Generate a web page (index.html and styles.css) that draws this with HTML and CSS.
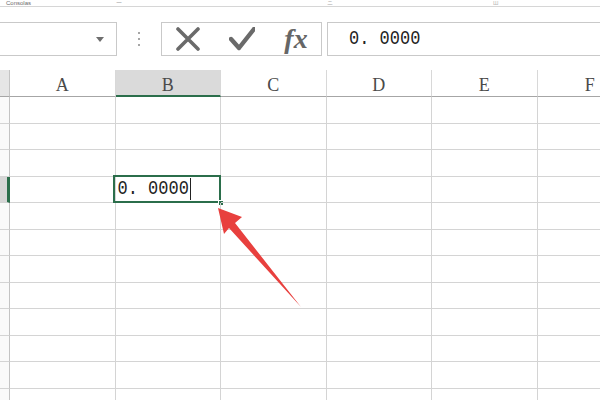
FILE: index.html
```html
<!DOCTYPE html>
<html lang="zh">
<head>
    <meta charset="UTF-8">
    <title>单元格格式 - 0.0000</title>
    <link rel="stylesheet" href="styles.css">
</head>
<body>
    <div class="sheet-app">
        <!-- 功能区底部（被截断） -->
        <div class="ribbon-edge">
            <div class="ribbon-labels">
                <span class="rl rl-1">Consolas</span>
                <span class="rl rl-2">ー</span>
                <span class="rl rl-3">ニ</span>
                <span class="rl rl-4">Ш</span>
            </div>
        </div>

        <!-- 编辑栏 -->
        <div class="formula-bar">
            <div class="name-box"><span class="drop"></span></div>
            <div class="grip"><i></i><i></i><i></i></div>
            <div class="fx-tools">
                <svg class="tool" width="26" height="24" viewBox="0 0 26 24">
                    <path d="M3 2 L23 22 M23 2 L3 22" stroke="#6a6a6a" stroke-width="3.6" stroke-linecap="round" fill="none"/>
                </svg>
                <svg class="tool" width="26" height="24" viewBox="0 0 26 24">
                    <path d="M2 12 L10 21 L25 2" stroke="#6a6a6a" stroke-width="4.4" stroke-linecap="round" stroke-linejoin="round" fill="none"/>
                </svg>
                <span class="tool fx">fx</span>
            </div>
            <div class="fx-input"><span class="num">0. 0000</span></div>
        </div>

        <!-- 工作表 -->
        <div class="grid" id="grid"></div>

        <!-- 红色箭头标注 -->
        <svg class="pointer" width="600" height="400" viewBox="0 0 600 400">
            <polygon points="218,208 242,217 235,223 301,307 229,228 224,234" fill="#e8403e"/>
        </svg>
    </div>

    <script src="grid.js"></script>
</body>
</html>
```

FILE: grid.js
```js
// 生成列标题和行
const grid = document.getElementById('grid');
const cols = ['A', 'B', 'C', 'D', 'E', 'F'];
const activeCol = 1;
const activeRow = 3;

let html = '<div class="corner"></div>';
cols.forEach((c, i) => {
    html += `<div class="col-head${i === activeCol ? ' on' : ''}">${c}</div>`;
});

for (let r = 0; r < 12; r++) {
    html += `<div class="row-head${r === activeRow ? ' on' : ''}"></div>`;
    cols.forEach((c, i) => {
        if (r === activeRow && i === activeCol) {
            html += '<div class="cell active"><span class="num">0. 0000</span><span class="caret"></span><span class="handle"></span></div>';
        } else {
            html += '<div class="cell"></div>';
        }
    });
}
grid.innerHTML = html;
```

FILE: styles.css
```css
* {
    margin: 0;
    padding: 0;
    box-sizing: border-box;
}

body {
    background: #fff;
    font-family: 'Liberation Sans', sans-serif;
}

.sheet-app {
    position: relative;
    width: 600px;
    height: 400px;
    overflow: hidden;
    background: #fff;
}

/* 功能区底部 */
.ribbon-edge {
    height: 7px;
    border-bottom: 1px solid #d6d6d6;
}

.ribbon-labels {
    display: flex;
    font-size: 6px;
    line-height: 6px;
    color: #6a6a6a;
}

.rl-1 { margin-left: 6px; }
.rl-2 { margin-left: 85px; color: #aaa; }
.rl-3 { margin-left: 205px; color: #aaa; }
.rl-4 { margin-left: 160px; color: #bbb; }

/* 编辑栏 */
.formula-bar {
    display: flex;
    height: 63px;
    padding-top: 15px;
}

.name-box {
    width: 119px;
    height: 34px;
    margin-left: -2px;
    border: 1px solid #c9c9c9;
    display: flex;
    align-items: center;
    justify-content: flex-end;
    padding-right: 12px;
}

.drop {
    border-left: 4px solid transparent;
    border-right: 4px solid transparent;
    border-top: 5px solid #6e6e6e;
}

.grip {
    width: 44px;
    height: 34px;
    display: flex;
    flex-direction: column;
    align-items: center;
    justify-content: center;
    gap: 4px;
}

.grip i {
    width: 2px;
    height: 2px;
    background: #a6a6a6;
}

.fx-tools {
    width: 161px;
    height: 34px;
    border: 1px solid #c9c9c9;
    display: flex;
    align-items: center;
    gap: 28px;
    padding-left: 13px;
}

.tool {
    display: block;
    width: 26px;
    flex: none;
}

.fx {
    font-family: 'Liberation Serif', 'DejaVu Serif', serif;
    font-style: italic;
    font-weight: bold;
    font-size: 28px;
    color: #666;
    text-align: center;
    line-height: 30px;
}

.fx-input {
    flex: 1;
    height: 34px;
    margin-left: 5px;
    margin-right: -10px;
    border: 1px solid #c9c9c9;
    padding-left: 21px;
    display: flex;
    align-items: center;
}

.num {
    display: inline-block;
    font-family: 'Liberation Mono', monospace;
    font-size: 17px;
    line-height: 20px;
    color: #222;
    transform: scaleY(1.18);
}

/* 工作表 */
.grid {
    display: grid;
    grid-template-columns: 10px repeat(6, 105.5px);
    grid-template-rows: 27px repeat(12, 26.5px);
}

.corner,
.row-head {
    border-right: 1px solid #c4c4c4;
    border-bottom: 1px solid #d4d4d4;
    background: #fafafa;
}

.corner {
    background: #e6e6e6;
    border-bottom: 1px solid #a6a6a6;
}

.row-head.on {
    background: #d6d6d6;
    border-right: 3px solid #2b6e4b;
}

.col-head {
    border-right: 1px solid #d8d8d8;
    border-bottom: 1px solid #a6a6a6;
    font-family: 'Liberation Serif', serif;
    font-size: 18px;
    color: #4a4a4a;
    text-align: center;
    line-height: 31px;
}

.col-head.on {
    background: #dadada;
    border-bottom: 2px solid #2b6e4b;
    line-height: 30px;
}

.cell {
    position: relative;
    border-right: 1px solid #d4d4d4;
    border-bottom: 1px solid #d4d4d4;
}

.cell.active {
    display: flex;
    align-items: center;
    padding-left: 2px;
}

.cell.active::before {
    content: '';
    position: absolute;
    top: -2px;
    left: -3px;
    right: -1px;
    bottom: -1px;
    border: 2px solid #2b6e4b;
}

.caret {
    width: 1px;
    height: 22px;
    margin-left: 1px;
    background: #222;
}

.handle {
    position: absolute;
    right: -4px;
    bottom: -4px;
    width: 6px;
    height: 6px;
    background: #2b6e4b;
    border: 1px solid #fff;
}

/* 箭头 */
.pointer {
    position: absolute;
    top: 0;
    left: 0;
    pointer-events: none;
}
```
